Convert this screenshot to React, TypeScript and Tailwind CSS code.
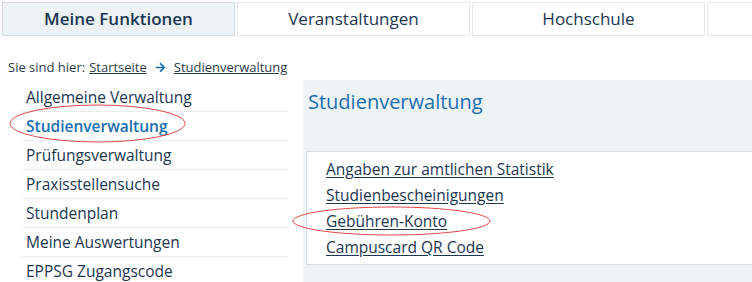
import React from 'react';
import { FaArrowRight } from 'react-icons/fa';

const tabs = [
    { label: 'Meine Funktionen', active: true },
    { label: 'Veranstaltungen', active: false },
    { label: 'Hochschule', active: false },
    { label: '', active: false },
];

const navItems = [
    { label: 'Allgemeine Verwaltung', active: false },
    { label: 'Studienverwaltung', active: true },
    { label: 'Prüfungsverwaltung', active: false },
    { label: 'Praxisstellensuche', active: false },
    { label: 'Stundenplan', active: false },
    { label: 'Meine Auswertungen', active: false },
    { label: 'EPPSG Zugangscode', active: false },
];

const links = [
    'Angaben zur amtlichen Statistik',
    'Studienbescheinigungen',
    'Gebühren-Konto',
    'Campuscard QR Code',
];

function App() {
    return (
        <div className="relative w-[752px] h-[282px] overflow-hidden bg-white font-['Open_Sans',sans-serif] text-[#1b3652]">
            {/* top navigation */}
            <div className="flex gap-[2px] pl-[2px] pt-[2px]">
                {tabs.map((tab, i) => (
                    <div
                        key={i}
                        className={`flex h-[34px] w-[233px] shrink-0 items-center justify-center border text-[17px] ${
                            tab.active
                                ? 'border-[#d5dde1] bg-[#edf3f5] font-semibold'
                                : 'border-[#e6e9ea] bg-white'
                        }`}
                    >
                        {tab.label}
                    </div>
                ))}
            </div>

            {/* breadcrumb */}
            <div className="mt-[22px] flex items-center pl-[8px] text-[13px] leading-[18px] text-[#2b3b4b]">
                <span>Sie sind hier:</span>
                <a className="ml-[4px] underline">Startseite</a>
                <FaArrowRight className="mx-[8px] text-[11px] text-[#1b6eb0]" />
                <a className="underline">Studienverwaltung</a>
            </div>

            <div className="mt-[4px] flex">
                {/* side nav */}
                <ul className="ml-[22px] mr-[16px] w-[265px] shrink-0 pt-[3px]">
                    {navItems.map(item => (
                        <li
                            key={item.label}
                            className={`border-b border-dotted border-[#d3d9dc] pl-[4px] text-[15.5px] leading-[28px] ${
                                item.active ? 'font-semibold text-[#1b6eb0]' : ''
                            }`}
                        >
                            {item.label}
                        </li>
                    ))}
                </ul>

                {/* content */}
                <div className="h-[210px] w-[470px] shrink-0 bg-[#eef4f6] pl-[3px] pt-[8px]">
                    <h1 className="pl-[2px] text-[20px] leading-[28px] text-[#1b6eb0]">Studienverwaltung</h1>
                    <div className="mt-[35px] border border-[#d9dfe2] bg-white pb-[4px] pl-[19px] pt-[4px]">
                        {links.map(link => (
                            <div key={link} className="text-[15.5px] leading-[26px]">
                                <a className="underline underline-offset-2">{link}</a>
                            </div>
                        ))}
                    </div>
                </div>
            </div>

            {/* annotations */}
            <svg className="pointer-events-none absolute left-0 top-0" width="752" height="282">
                <ellipse cx="97.5" cy="123.5" rx="87.5" ry="18.5" fill="none" stroke="#e2474c" strokeWidth="1" />
                <ellipse cx="391.5" cy="221" rx="98.5" ry="14" fill="none" stroke="#e2474c" strokeWidth="1" />
            </svg>
        </div>
    );
}

export default App;
